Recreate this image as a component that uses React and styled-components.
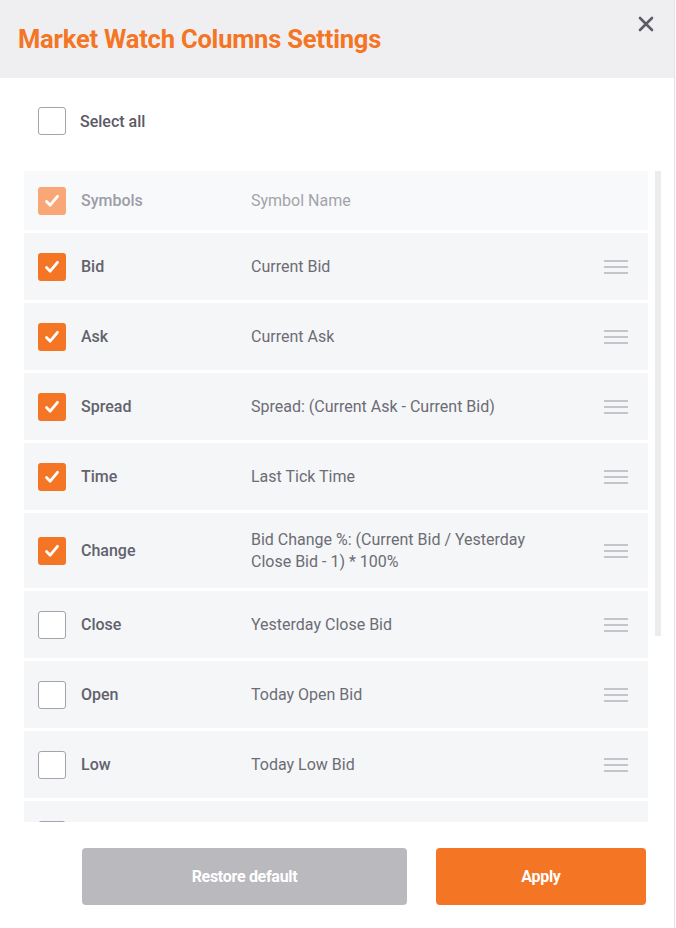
import React from 'react';
import styled, { createGlobalStyle } from 'styled-components';

const GlobalStyle = createGlobalStyle`
    html, body {
        margin: 0;
        padding: 0;
        background: #ffffff;
    }
    body {
        font-family: Roboto, 'Noto Sans', 'Liberation Sans', sans-serif;
        -webkit-font-smoothing: antialiased;
    }
`;

const columns = [
    { name: 'Symbols', desc: 'Symbol Name', checked: true, fixed: true },
    { name: 'Bid', desc: 'Current Bid', checked: true },
    { name: 'Ask', desc: 'Current Ask', checked: true },
    { name: 'Spread', desc: 'Spread: (Current Ask - Current Bid)', checked: true },
    { name: 'Time', desc: 'Last Tick Time', checked: true },
    { name: 'Change', desc: 'Bid Change %: (Current Bid / Yesterday Close Bid - 1) * 100%', checked: true },
    { name: 'Close', desc: 'Yesterday Close Bid', checked: false },
    { name: 'Open', desc: 'Today Open Bid', checked: false },
    { name: 'Low', desc: 'Today Low Bid', checked: false },
    { name: 'High', desc: 'Today High Bid', checked: false },
];

const Modal = styled.div`
    width: 674px;
    height: 928px;
    border-right: 1px solid #e4e4e7;
    background: #ffffff;
    display: flex;
    flex-direction: column;
`;

const Header = styled.div`
    height: 78px;
    background: #efeff1;
    position: relative;
    display: flex;
    align-items: center;
    padding-left: 18px;
    box-sizing: border-box;
`;

const Title = styled.h1`
    margin: 0;
    font-size: 25.5px;
    font-weight: 700;
    color: #f47524;
    letter-spacing: -0.2px;
`;

const Close = styled.button`
    position: absolute;
    top: 15px;
    right: 19px;
    width: 18px;
    height: 18px;
    padding: 0;
    border: 0;
    background: none;
    display: flex;
    align-items: center;
    justify-content: center;
`;

const SelectAllRow = styled.label`
    display: flex;
    align-items: center;
    gap: 14px;
    padding: 29px 0 0 38px;
    height: 28px;
    margin-bottom: 36px;
    font-size: 16px;
    font-weight: 500;
    color: #5a5a64;
`;

const Box = styled.span`
    flex: none;
    width: 28px;
    height: 28px;
    box-sizing: border-box;
    border-radius: 3px;
    display: flex;
    align-items: center;
    justify-content: center;
    background: ${(props) => (props.checked ? (props.faded ? '#f9a777' : '#f47524') : '#ffffff')};
    border: ${(props) => (props.checked ? 'none' : '1.5px solid #a3a3ab')};
`;

const ListWrap = styled.div`
    display: flex;
    align-items: flex-start;
    margin-left: 24px;
    height: 651px;
`;

const List = styled.div`
    width: 624px;
    height: 651px;
    overflow: hidden;
    display: flex;
    flex-direction: column;
    gap: 3px;
`;

const Row = styled.div`
    flex: none;
    display: flex;
    align-items: center;
    box-sizing: border-box;
    min-height: ${(props) => (props.fixed ? '59px' : '67px')};
    padding: 15.5px 20px 15.5px 14px;
    background: ${(props) => (props.fixed ? '#f8f9fb' : '#f5f6f8')};
`;

const Name = styled.span`
    width: 170px;
    margin-left: 15px;
    flex: none;
    font-size: 16px;
    font-weight: 500;
    color: ${(props) => (props.fixed ? '#9d9da6' : '#62626d')};
`;

const Desc = styled.span`
    flex: 1;
    max-width: 300px;
    font-size: 16px;
    line-height: 22px;
    color: ${(props) => (props.fixed ? '#a3a3ab' : '#6c6c75')};
`;

const Handle = styled.span`
    margin-left: auto;
    width: 24px;
    display: flex;
    flex-direction: column;
    gap: 4px;
    & > i {
        display: block;
        height: 2px;
        background: #c4c4ca;
    }
`;

const Track = styled.div`
    width: 6px;
    margin-left: 7px;
    height: 465px;
    background: #ececef;
`;

const Footer = styled.div`
    display: flex;
    gap: 29px;
    padding: 26px 0 0 82px;
`;

const Button = styled.button`
    height: 57px;
    width: ${(props) => props.w}px;
    border: 0;
    border-radius: 4px;
    font-family: Roboto, 'Liberation Sans', sans-serif;
    font-size: 16px;
    font-weight: 700;
    letter-spacing: -0.3px;
    color: #ffffff;
    background: ${(props) => (props.primary ? '#f47524' : '#b9b9be')};
`;

const Check = () => (
    <svg width="16" height="14" viewBox="0 0 16 14">
        <path d="M2.5 7.5 L6.2 11.2 L13.5 2.3" fill="none" stroke="#fff" strokeWidth="2.8" strokeLinecap="round" strokeLinejoin="round" />
    </svg>
);

const CheckBox = ({ checked, faded }) => (
    <Box checked={checked} faded={faded}>
        {checked && <Check />}
    </Box>
);

const App = () => (
    <Modal>
        <GlobalStyle />
        <Header>
            <Title>Market Watch Columns Settings</Title>
            <Close aria-label="close">
                <svg width="16" height="16" viewBox="0 0 16 16">
                    <path d="M2 2 L14 14 M14 2 L2 14" stroke="#5c5c66" strokeWidth="2.6" strokeLinecap="round" />
                </svg>
            </Close>
        </Header>
        <SelectAllRow>
            <CheckBox checked={false} />
            Select all
        </SelectAllRow>
        <ListWrap>
            <List>
                {columns.map((col) => (
                    <Row key={col.name} fixed={col.fixed}>
                        <CheckBox checked={col.checked} faded={col.fixed} />
                        <Name fixed={col.fixed}>{col.name}</Name>
                        <Desc fixed={col.fixed}>{col.desc}</Desc>
                        {!col.fixed && (
                            <Handle>
                                <i />
                                <i />
                                <i />
                            </Handle>
                        )}
                    </Row>
                ))}
            </List>
            <Track />
        </ListWrap>
        <Footer>
            <Button w={325}>Restore default</Button>
            <Button w={210} primary>
                Apply
            </Button>
        </Footer>
    </Modal>
);

export default App;
